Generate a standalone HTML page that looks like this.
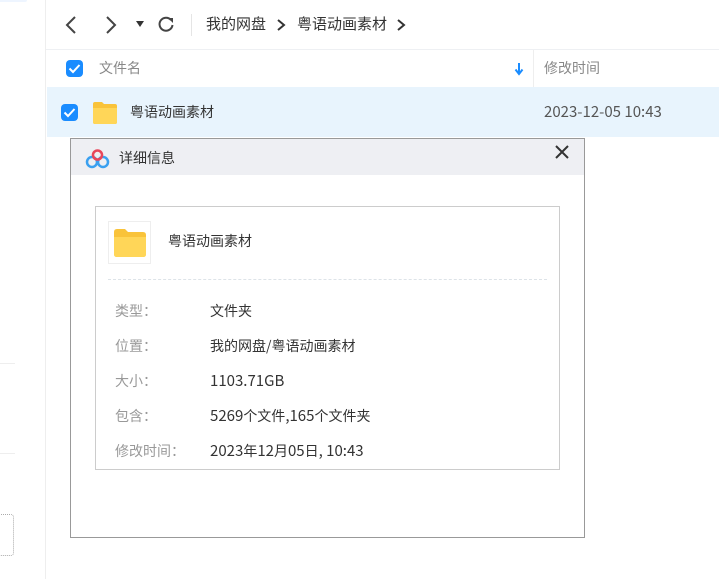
<!DOCTYPE html>
<html><head><meta charset="utf-8"><style>
*{margin:0;padding:0;box-sizing:border-box}
body{width:719px;height:579px;overflow:hidden;background:#fff;font-family:"Noto Sans CJK SC","Liberation Sans",sans-serif;position:relative;color:#333;line-height:1.3}
.a{position:absolute}
.cb{position:absolute;width:17px;height:17px;border-radius:4px;background:#1a8cff}
.cb svg{position:absolute;left:2px;top:3px}
.lbl{position:absolute;left:115px;font-size:14px;color:#999}
.val{position:absolute;left:210px;font-size:14px;color:#333}
</style></head><body>
<div class="a" style="left:0;top:0;width:27px;height:2px;background:#eef5ff;border-radius:0 0 4px 0"></div>
<div class="a" style="left:45px;top:0;width:1px;height:579px;background:#eee"></div>
<div class="a" style="left:0;top:363px;width:15px;height:1px;background:#eee"></div>
<div class="a" style="left:0;top:453px;width:15px;height:1px;background:#eee"></div>
<div class="a" style="left:-4px;top:514px;width:18px;height:42px;border:1px dotted #aaa;border-radius:3px"></div>
<div class="a" style="left:46px;top:49px;width:673px;height:1px;background:#eef0f3"></div>
<svg class="a" style="left:64px;top:15px" width="14" height="20"><path d="M11 2 L3 10 L11 18" fill="none" stroke="#444" stroke-width="2"/></svg>
<svg class="a" style="left:104px;top:15px" width="14" height="20"><path d="M3 2 L11 10 L3 18" fill="none" stroke="#444" stroke-width="2"/></svg>
<svg class="a" style="left:136px;top:21px" width="8" height="6"><path d="M0 0 L8 0 L4 6Z" fill="#333"/></svg>
<svg class="a" style="left:157px;top:15px" width="18" height="18"><path d="M14 5 A6.5 6.5 0 1 0 15.5 10" fill="none" stroke="#444" stroke-width="2"/><path d="M11 3 L16 3 L16 8Z" fill="#444"/></svg>
<div class="a" style="left:191px;top:14px;width:1px;height:22px;background:#e5e5e5"></div>
<div class="a" style="left:206px;top:14px;font-size:15px;color:#333">我的网盘</div>
<svg class="a" style="left:276px;top:19px" width="10" height="12"><path d="M2 1 L8 6 L2 11" fill="none" stroke="#333" stroke-width="2"/></svg>
<div class="a" style="left:297px;top:14px;font-size:15px;color:#333">粤语动画素材</div>
<svg class="a" style="left:396px;top:19px" width="10" height="12"><path d="M2 1 L8 6 L2 11" fill="none" stroke="#333" stroke-width="2"/></svg>
<div class="cb" style="left:66px;top:60px"><svg width="13" height="11"><path d="M1.5 5.5 L5 9 L11.5 2" fill="none" stroke="#fff" stroke-width="2"/></svg></div>
<div class="a" style="left:99px;top:59px;font-size:14px;color:#888">文件名</div>
<svg class="a" style="left:514px;top:62px" width="10" height="14"><path d="M5 1 V11 M1.5 7.5 L5 12 L8.5 7.5" fill="none" stroke="#1a8cff" stroke-width="2"/></svg>
<div class="a" style="left:533px;top:50px;width:1px;height:37px;background:#eee"></div>
<div class="a" style="left:544px;top:59px;font-size:14px;color:#888">修改时间</div>
<div class="a" style="left:47px;top:87px;width:672px;height:50px;background:#e8f4fd"></div>
<div class="cb" style="left:61px;top:104px"><svg width="13" height="11"><path d="M1.5 5.5 L5 9 L11.5 2" fill="none" stroke="#fff" stroke-width="2"/></svg></div>
<svg class="a" style="left:92px;top:101px" width="26" height="24"><path d="M1 3 Q1 1 3 1 H10 L12 3 H23 Q25 3 25 5 V21 Q25 23 23 23 H3 Q1 23 1 21Z" fill="#f9c33a"/><path d="M1 7 H25 V21 Q25 23 23 23 H3 Q1 23 1 21Z" fill="#ffd658"/></svg>
<div class="a" style="left:130px;top:103px;font-size:14px;color:#333">粤语动画素材</div>
<div class="a" style="left:544px;top:102px;font-size:15px;color:#555">2023-12-05 10:43</div>
<div class="a" style="left:70px;top:138px;width:515px;height:400px;border:1px solid #999;background:#fff"></div>
<div class="a" style="left:71px;top:139px;width:513px;height:36px;background:#eeeff3"></div>
<svg class="a" style="left:85px;top:149px" width="26" height="20"><circle cx="7" cy="13" r="5" fill="none" stroke="#3aa0f0" stroke-width="2.5"/><circle cx="18" cy="13" r="5" fill="none" stroke="#3aa0f0" stroke-width="2.5"/><circle cx="12.5" cy="6" r="4.5" fill="none" stroke="#e8465b" stroke-width="2.5"/></svg>
<div class="a" style="left:119px;top:149px;font-size:14px;color:#333">详细信息</div>
<svg class="a" style="left:555px;top:145px" width="14" height="14"><path d="M1 1 L13 13 M13 1 L1 13" stroke="#333" stroke-width="2"/></svg>
<div class="a" style="left:95px;top:206px;width:465px;height:264px;border:1px solid #ccc"></div>
<div class="a" style="left:108px;top:221px;width:43px;height:43px;border:1px solid #eee;background:#fff"></div>
<svg class="a" style="left:113px;top:228px" width="34" height="30"><path d="M1 4 Q1 1 4 1 H12 L15 4 H30 Q33 4 33 7 V26 Q33 29 30 29 H4 Q1 29 1 26Z" fill="#f9c33a"/><path d="M1 9 H33 V26 Q33 29 30 29 H4 Q1 29 1 26Z" fill="#ffd658"/></svg>
<div class="a" style="left:168px;top:232px;font-size:14px;color:#333">粤语动画素材</div>
<div class="a" style="left:108px;top:279px;width:439px;border-top:1px dashed #dde3e8"></div>
<div class="lbl" style="top:302px">类型：</div><div class="val" style="top:302px">文件夹</div>
<div class="lbl" style="top:337px">位置：</div><div class="val" style="top:337px">我的网盘/粤语动画素材</div>
<div class="lbl" style="top:372px">大小：</div><div class="val" style="top:371px;font-size:15px">1103.71GB</div>
<div class="lbl" style="top:407px">包含：</div><div class="val" style="top:406px;font-size:15px">5269<span style="font-size:14px">个文件</span>,165<span style="font-size:14px">个文件夹</span></div>
<div class="lbl" style="top:442px">修改时间：</div><div class="val" style="top:441px;font-size:15px">2023<span style="font-size:14px">年</span>12<span style="font-size:14px">月</span>05<span style="font-size:14px">日</span>, 10:43</div>
</body></html>
